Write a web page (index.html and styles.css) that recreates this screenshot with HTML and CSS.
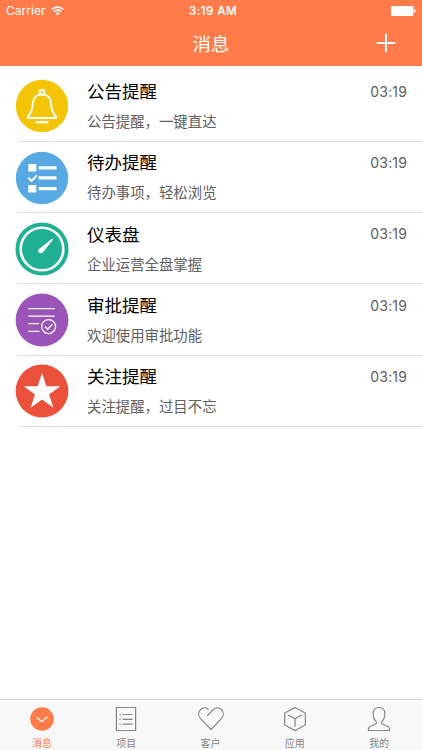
FILE: index.html
```html
<!DOCTYPE html>
<html lang="zh-CN">
<head>
<meta charset="utf-8">
<title>消息</title>
<link rel="stylesheet" href="styles.css">
</head>
<body>
<div class="app">
  <header class="header">
    <div class="status">
      <div class="carrier"><span>Carrier</span>
        <svg class="wifi" width="13" height="10" viewBox="0 0 13 10" fill="none" stroke="#fff" stroke-width="1.6"><path d="M.8 3.4a8.2 8.2 0 0 1 11.4 0M2.8 5.6a5.3 5.3 0 0 1 7.4 0"/><path d="M6.5 9.4 4.5 7.3a2.9 2.9 0 0 1 4 0z" fill="#fff" stroke="none"/></svg>
      </div>
      <div class="clock">3:19 AM</div>
      <div class="power"><svg width="26" height="10" viewBox="0 0 26 10" fill="#fff"><rect width="22.5" height="10" rx="1.2"/><path d="M23.2 3.3c2 .3 2 3.1 0 3.4z"/></svg></div>
    </div>
    <div class="nav">
      <h1 class="title">消息</h1>
      <svg class="add" width="20" height="20" viewBox="0 0 20 20" stroke="#fff" stroke-width="2"><path d="M10 .8v18.4M.8 10h18.4"/></svg>
    </div>
  </header>
  <main class="list">
    <article class="row">
      <svg class="avatar" viewBox="0 0 54 54"><circle cx="27" cy="27" r="26.2" fill="#f3c506"/><g fill="none" stroke="#fff" stroke-width="2" stroke-linejoin="round"><circle cx="27" cy="13.3" r="2.4"/><path d="M27 15.3c-5.2 0-8.6 3.6-9 8.7-.4 6-1.3 9.600-4.800 13.500-.8.9-.4 1.500.6 1.500h26.400c1 0 1.400-.6.6-1.500-3.500-3.900-4.400-7.500-4.800-13.500-.4-5.100-3.800-8.700-9-8.700z"/><path d="M20.700 43.200h12.600" stroke-width="2.400"/></g></svg>
      <div class="copy"><h2>公告提醒</h2><p>公告提醒，一键直达</p></div><time>03:19</time>
    </article>
    <article class="row">
      <svg class="avatar" viewBox="0 0 54 54"><circle cx="27" cy="27" r="26.200" fill="#56a9e2"/><path d="M13.300 13h8v7.600h-8zM13.300 34h8v7.600h-8zM23.700 15.200h17.800v3.300H23.700zM23.700 25.200h17.800v3.300H23.700zM23.700 36h17.800v3.300H23.700z" fill="#fff"/><path d="m13.300 26.800 3.300 3.200 5.200-5.600" fill="none" stroke="#fff" stroke-width="1.900"/></svg>
      <div class="copy"><h2>待办提醒</h2><p>待办事项，轻松浏览</p></div><time>03:19</time>
    </article>
    <article class="row">
      <svg class="avatar" viewBox="0 0 54 54"><circle cx="27" cy="27" r="26.500" fill="#1fb093"/><circle cx="27" cy="27" r="21.300" fill="none" stroke="#fff" stroke-width="2.600"/><path d="M23.700 27.200 36.700 16.900c.8-.5 1.600.3 1.100 1.100L27.800 30.500c-2.500 2.300-6.300-1-4.100-3.300z" fill="#fff"/></svg>
      <div class="copy"><h2>仪表盘</h2><p>企业运营全盘掌握</p></div><time>03:19</time>
    </article>
    <article class="row">
      <svg class="avatar" viewBox="0 0 54 54"><circle cx="27" cy="27" r="26.400" fill="#9b55b8"/><g fill="none" stroke="#fff" stroke-width="1.300"><path d="M13.300 15.600h26.400M13.300 23.200h26.400M13.300 30.700h10.800M13.300 38.300h11"/><circle cx="33.600" cy="33.600" r="7"/><path d="m29.900 33.500 2.800 2.800 4.700-5"/></g></svg>
      <div class="copy"><h2>审批提醒</h2><p>欢迎使用审批功能</p></div><time>03:19</time>
    </article>
    <article class="row">
      <svg class="avatar" viewBox="0 0 54 54"><circle cx="27" cy="27" r="26.400" fill="#eb503a"/><path d="m27 9 4.400 13.200h14l-11.300 8.200 4.300 13.400L27 35.600l-11.400 8.200 4.300-13.400L8.600 22.200h14z" fill="#fff"/></svg>
      <div class="copy"><h2>关注提醒</h2><p>关注提醒，过目不忘</p></div><time>03:19</time>
    </article>
  </main>
  <nav class="tabs">
    <a class="tab active"><svg viewBox="0 0 26 26"><circle cx="13" cy="13" r="11.800" fill="#ff7b49"/><path d="m7.700 11.200 5.100 4.600 5.600-5" fill="none" stroke="#fff" stroke-width="1.200"/></svg><span>消息</span></a>
    <a class="tab"><svg viewBox="0 0 26 26"><path d="M3.400 1.500h19.200v23H3.400zM9.500 8.500h10M9.500 13.300h10M9.500 18.100h10M6.400 8.500h1.300M6.400 13.300h1.300M6.400 18.100h1.300"/></svg><span>项目</span></a>
    <a class="tab"><svg viewBox="0 0 26 26"><path d="M10.800 3.600C8.300 1.300 4.900 1.300 2.600 3.500.2 5.900.1 9.600 2.400 12.300L13 23.700 23.600 12.300c2.300-2.700 2.200-6.400-.2-8.800-2.500-2.300-6.100-2.100-8.700.5L9.200 9.800"/></svg><span>客户</span></a>
    <a class="tab"><svg viewBox="0 0 26 26"><path d="M13 1.500 23.300 7v12L13 24.500 2.700 19V7zM6.200 8.900l6.800 3.800 6.800-3.800M13 12.700v8"/></svg><span>应用</span></a>
    <a class="tab"><svg viewBox="0 0 26 26"><path d="M13 1.500c-3.700 0-6 2.300-5.900 6 .1 4 1 6.300 3.200 8.200v1.700c0 1.200-7.800 2.500-7.800 5.100v2h21v-2c0-2.600-7.800-3.900-7.800-5.100v-1.700c2.200-1.900 3.100-4.200 3.200-8.200.1-3.700-2.200-6-5.900-6z"/></svg><span>我的</span></a>
  </nav>
</div>
</body>
</html>
```
FILE: styles.css
```css
* { box-sizing: border-box; }
body {
  margin: 0;
  background: #fff;
  font-family: Inter, "Noto Sans CJK SC", sans-serif;
}
h1, h2, p { margin: 0; font-weight: 400; }
svg { display: block; flex: none; }
.app { height: 750px; display: flex; flex-direction: column; overflow: hidden; }
.header { height: 65.5px; flex: none; background: #ff7b49; color: #fff; }
.status {
  height: 22px;
  display: grid;
  grid-template-columns: 1fr auto 1fr;
  align-items: center;
  padding: 0 6px;
  font-size: 12px;
  line-height: 22px;
}
.carrier { display: flex; align-items: center; gap: 5px; }
.carrier span { letter-spacing: 0.05px; }
.clock { font-weight: 600; font-size: 11.5px; letter-spacing: 0.4px; padding-left: 4px; }
.power { justify-self: end; margin-right: -1px; }
.nav {
  height: 43px;
  display: grid;
  grid-template-columns: 1fr auto 1fr;
  align-items: center;
  padding: 0 26px;
}
.title { grid-column: 2; padding-top: 1px; font-size: 18.5px; line-height: 27px; }
.add { justify-self: end; margin-top: -1px; }
.list { flex: 1; padding-top: 5px; }
.row {
  height: 71.3px;
  margin-left: 15px;
  padding-right: 15px;
  display: flex;
  align-items: flex-start;
  border-bottom: 1px solid;
  border-image: linear-gradient(to right, #fff, #dedfe3 8px) 1;
}
.avatar { width: 54px; height: 54px; margin-top: 8.8px; }
.copy { flex: 1; padding: 8.6px 0 0 18px; }
.copy h2 { font-size: 17.5px; line-height: 26px; color: #000; }
.copy p { margin-top: 6px; font-size: 14.4px; line-height: 22px; color: #606060; }
.row time { padding-top: 11.4px; font-size: 14px; letter-spacing: 0.15px; line-height: 20px; color: #606060; }
.tabs {
  height: 51px;
  flex: none;
  display: flex;
  padding-right: 1px;
  background: #f8f8f8;
  border-top: 1px solid #d8d8d8;
}
.tab {
  flex: 1;
  display: flex;
  flex-direction: column;
  align-items: center;
  padding-top: 6px;
  font-size: 10px;
  line-height: 14px;
  color: #868686;
}
.tab svg { width: 26px; height: 26px; fill: none; stroke: #858585; stroke-width: 1.2; }
.tab.active svg { stroke: none; }
.tab span { margin-top: 4px; }
.tab.active { color: #ff7b49; }
```
